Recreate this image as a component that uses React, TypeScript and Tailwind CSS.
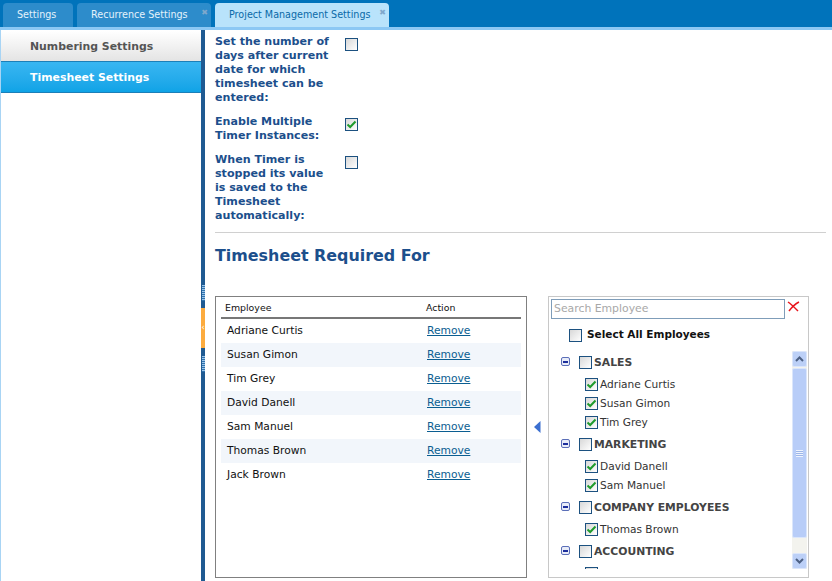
const employees = ["Adriane Curtis", "Susan Gimon", "Tim Grey", "David Danell", "Sam Manuel", "Thomas Brown", "Jack Brown"];

const groups = [
  { name: "SALES", members: ["Adriane Curtis", "Susan Gimon", "Tim Grey"] },
  { name: "MARKETING", members: ["David Danell", "Sam Manuel"] },
  { name: "COMPANY EMPLOYEES", members: ["Thomas Brown"] },
  { name: "ACCOUNTING", members: [""] },
];

function Checkbox({ checked = false }: { checked?: boolean }) {
  return (
    <span className="flex h-[13px] w-[13px] shrink-0 items-center justify-center border border-[#1c5180] bg-gradient-to-br from-[#d8d8d8] to-white">
      {checked && (
        <svg width="11" height="11" viewBox="0 0 11 11" fill="none">
          <path d="M1.5 5.5 L4.2 8 L9.5 2.5" stroke="#1f9b2c" strokeWidth="2" />
        </svg>
      )}
    </span>
  );
}

function Tab({ label, active = false, close = false, width }: { label: string; active?: boolean; close?: boolean; width: string }) {
  return (
    <div
      className={`relative flex h-6 items-center rounded-t-[4px] pl-[14px] text-[9.6px] ${width} ${
        active ? "bg-[#b9e3fb] text-[#0a6aa8]" : "bg-[#2d8ccb] text-[#e4f2fb]"
      }`}
    >
      {label}
      {close && <span className="absolute right-[3px] top-[5px] text-[8px] font-bold leading-[9px] text-[#7fa8cc]">✖</span>}
    </div>
  );
}

function Setting({ lines, checked = false }: { lines: string[]; checked?: boolean }) {
  return (
    <div className="flex">
      <div className="w-[130px] text-[11.1px] font-bold leading-[14px] text-[#1c4f8c]">
        {lines.map((l) => (
          <div key={l}>{l}</div>
        ))}
      </div>
      <div className="pt-[3px]">
        <Checkbox checked={checked} />
      </div>
    </div>
  );
}

function Grip() {
  return <div className="mx-auto h-4 w-[3px] bg-[repeating-linear-gradient(to_bottom,#9cc4e8_0,#9cc4e8_1px,#2f72ad_1px,#2f72ad_2px)]" />;
}

function EmployeeTable() {
  return (
    <div className="h-[282px] w-[312px] border border-[#808080] px-[5px] pt-[3px]">
      <div className="flex h-[17px] items-center text-[9.4px] text-[#111]">
        <span className="w-[205px] pl-[4px]">Employee</span>
        <span>Action</span>
      </div>
      <div className="h-[2px] bg-[#777]" />
      {employees.map((name, i) => (
        <div key={name} className={`flex h-6 items-center text-[10.7px] text-[#111] ${i % 2 === 1 ? "bg-[#f2f6fb]" : "bg-white"}`}>
          <span className="w-[206px] pl-[6px]">{name}</span>
          <a className="text-[#0b5e91] underline">Remove</a>
        </div>
      ))}
    </div>
  );
}

function Scrollbar() {
  return (
    <div className="flex h-[218px] w-[15px] shrink-0 flex-col bg-[#f3f3ee]">
      <div className="flex h-[16px] items-center justify-center rounded-[2px] border border-[#dbe6fb] bg-[#bcd0f7]">
        <svg width="9" height="6" viewBox="0 0 9 6" fill="none">
          <path d="M1 5 L4.5 1.5 L8 5" stroke="#4d6185" strokeWidth="2" />
        </svg>
      </div>
      <div className="mt-[1px] flex h-[170px] items-center justify-center rounded-[2px] border border-[#dbe6fb] bg-[#b8cdf8]">
        <div className="h-[7px] w-[7px] bg-[repeating-linear-gradient(to_bottom,#eef3fe_0,#eef3fe_1px,#9db6e8_1px,#9db6e8_2px)]" />
      </div>
      <div className="flex-1" />
      <div className="flex h-[16px] items-center justify-center rounded-[2px] border border-[#dbe6fb] bg-[#bcd0f7]">
        <svg width="9" height="6" viewBox="0 0 9 6" fill="none">
          <path d="M1 1 L4.5 4.5 L8 1" stroke="#4d6185" strokeWidth="2" />
        </svg>
      </div>
    </div>
  );
}

function EmployeePicker() {
  return (
    <div className="h-[282px] w-[261px] border border-[#c8c8c8] pl-[2px] pt-[2px]">
      <div className="flex items-center">
        <div className="flex h-[20px] w-[234px] items-center border border-[#7f9db9] pl-[2px] text-[10.85px] text-[#a8a8a8]">Search Employee</div>
        <svg className="mb-[5px] ml-[2px]" width="13" height="11" viewBox="0 0 13 11" fill="none">
          <path d="M1 1 C4 3 8 7 11 10 M12 1 C8 3 5 6 2 10" stroke="#e8141c" strokeWidth="1.5" />
        </svg>
      </div>
      <div className="mt-[9px] flex h-[14px] items-center gap-[5px] pl-[18px] text-[10.5px] font-bold text-[#111]">
        <Checkbox />
        Select All Employees
      </div>
      <div className="mt-[9px] flex pl-[10px] pr-[1px]">
        <div className="h-[218px] flex-1 overflow-hidden pt-[5px]">
          {groups.map((g) => (
            <div key={g.name} className="mb-[8px]">
              <div className="flex h-[14px] items-center text-[10.8px] font-bold text-[#444]">
                <span className="mb-[3px] flex h-[9px] w-[9px] items-center justify-center rounded-[2px] border border-[#5b6fb8] bg-[#e8ecf8]">
                  <span className="h-[2px] w-[5px] bg-[#1d2f9c]" />
                </span>
                <span className="mb-[1px] ml-[9px] mr-[2px]">
                  <Checkbox />
                </span>
                {g.name}
              </div>
              <div className="mt-[8px] flex flex-col gap-[5px] pl-[24px]">
                {g.members.map((m) => (
                  <div key={m} className="flex h-[14px] items-center gap-[2px] text-[10.6px] text-[#333]">
                    <span className="mb-[1px]">
                      <Checkbox checked={m !== ""} />
                    </span>
                    {m}
                  </div>
                ))}
              </div>
            </div>
          ))}
        </div>
        <Scrollbar />
      </div>
    </div>
  );
}

export default function App() {
  return (
    <div className="flex h-[581px] w-[832px] flex-col overflow-hidden bg-white font-['DejaVu_Sans','Liberation_Sans',sans-serif]">
      <div className="flex h-[27px] shrink-0 items-end gap-1 bg-[#0073bb] pl-[3px]">
        <Tab label="Settings" width="w-[70px]" />
        <Tab label="Recurrence Settings" close width="w-[134px]" />
        <Tab label="Project Management Settings" active close width="w-[174px]" />
      </div>
      <div className="h-[3px] shrink-0 bg-[#8cc8f4]" />
      <div className="flex min-h-0 flex-1">
        <div className="w-[201px] shrink-0 border-l border-[#a8d4f4] pt-[1px]">
          <div className="flex h-[30px] items-center bg-gradient-to-b from-white to-[#e4e4e4] pl-[29px] pt-[2px] text-[10.9px] font-bold text-[#555]">
            Numbering Settings
          </div>
          <div className="flex h-[32px] items-center border-y border-[#1c7fb8] bg-gradient-to-b from-[#38b6f2] to-[#0ea3e6] pl-[29px] pt-[2px] text-[10.9px] font-bold text-white">
            Timesheet Settings
          </div>
        </div>
        <div className="flex w-1 shrink-0 flex-col bg-[#1f5a92] pt-[255px]">
          <Grip />
          <div className="mt-[7px] flex h-10 items-center justify-center bg-[#fcab3e] text-[8px] leading-none text-white">‹</div>
          <div className="mt-2">
            <Grip />
          </div>
        </div>
        <div className="flex-1 pl-[10px] pr-[6px] pt-[5px]">
          <div className="flex flex-col gap-[10px]">
            <Setting lines={["Set the number of", "days after current", "date for which", "timesheet can be", "entered:"]} />
            <Setting lines={["Enable Multiple", "Timer Instances:"]} checked />
            <Setting lines={["When Timer is", "stopped its value", "is saved to the", "Timesheet", "automatically:"]} />
          </div>
          <div className="mt-[9px] h-px bg-[#d0d0d0]" />
          <h2 className="mt-[11px] text-[15.9px] font-bold leading-[24px] text-[#1c4f8c]">Timesheet Required For</h2>
          <div className="mt-[28px] flex items-start">
            <EmployeeTable />
            <div className="flex h-[282px] w-[21px] items-center justify-center">
              <svg className="mt-[-20px]" width="7" height="12" viewBox="0 0 7 12">
                <path d="M6.5 0 L0 6 L6.5 12 Z" fill="#3b6fd0" />
              </svg>
            </div>
            <EmployeePicker />
          </div>
        </div>
      </div>
    </div>
  );
}
